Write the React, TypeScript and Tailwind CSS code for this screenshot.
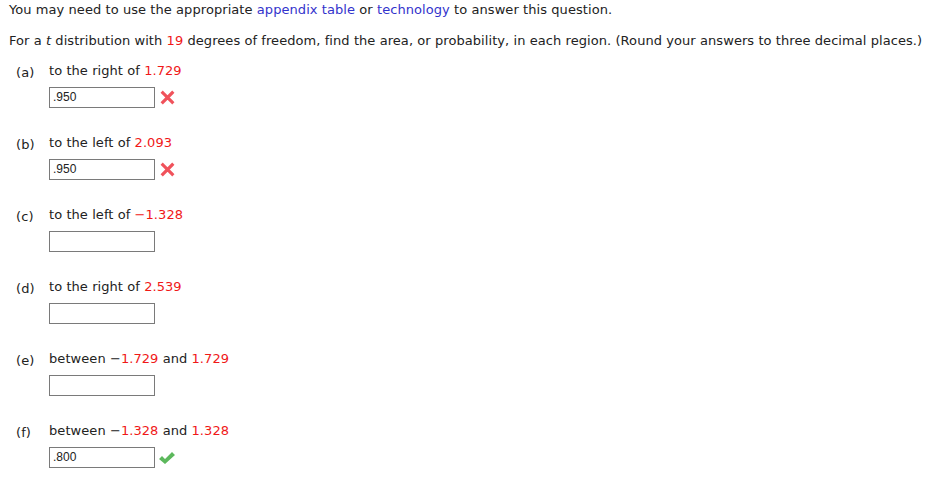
import { ReactNode } from "react"

function Cross() {
  return (
    <svg width="15" height="15" viewBox="0 0 16 16" className="ml-[5px]">
      <path d="M3 3 L13 13 M13 3 L3 13" stroke="#f0525b" strokeWidth="3.4" strokeLinecap="square" />
    </svg>
  )
}

function Check() {
  return (
    <svg width="18" height="14" viewBox="0 0 18 14" className="ml-[3px]">
      <path d="M1 8 L4 5 L7 8 L14 1 L17 4 L7 13 Z" fill="#5cb85c" />
    </svg>
  )
}

const Red = ({ children }: { children: ReactNode }) => <span className="text-[#f01818]">{children}</span>

interface PartProps {
  letter: string
  prompt: ReactNode
  value?: string
  status?: "wrong" | "right"
}

function Part({ letter, prompt, value, status }: PartProps) {
  return (
    <div className="flex pl-[16px]">
      <div className="w-[33px]">({letter})</div>
      <div>
        <div className="h-[16px] leading-[16px]">{prompt}</div>
        <div className="mt-[8px] flex items-center">
          <div className="h-[21px] w-[106px] border border-[#7a7a7a] bg-white pl-[3px] font-['Liberation_Sans',Arial,sans-serif] text-[12px] leading-[19px] tracking-normal text-[#222]">
            {value}
          </div>
          {status === "wrong" && <Cross />}
          {status === "right" && <Check />}
        </div>
      </div>
    </div>
  )
}

export default function App() {
  return (
    <div className="h-[482px] w-[926px] bg-white font-['DejaVu_Sans',Verdana,sans-serif] text-[13px] tracking-[0.07px] text-[#222]">
      <div className="pl-[9px] pt-[2px] leading-[16px]">
        You may need to use the appropriate <span className="text-[#3333cc]">appendix table</span> or{" "}
        <span className="text-[#3333cc]">technology</span> to answer this question.
      </div>
      <div className="mt-[15px] pl-[9px] leading-[16px]">
        For a <i>t</i> distribution with <Red>19</Red> degrees of freedom, find the area, or probability, in each region.
        (Round your answers to three decimal places.)
      </div>
      <div className="mt-[14px] flex flex-col gap-[27px]">
        <Part letter="a" prompt={<>to the right of <Red>1.729</Red></>} value=".950" status="wrong" />
        <Part letter="b" prompt={<>to the left of <Red>2.093</Red></>} value=".950" status="wrong" />
        <Part letter="c" prompt={<>to the left of <Red>−1.328</Red></>} />
        <Part letter="d" prompt={<>to the right of <Red>2.539</Red></>} />
        <Part letter="e" prompt={<>between −<Red>1.729</Red> and <Red>1.729</Red></>} />
        <Part letter="f" prompt={<>between −<Red>1.328</Red> and <Red>1.328</Red></>} value=".800" status="right" />
      </div>
    </div>
  )
}
